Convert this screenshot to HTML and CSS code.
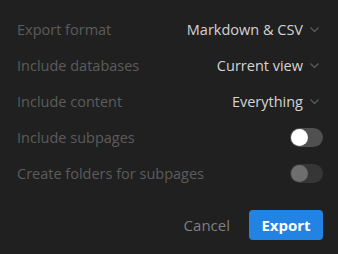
FILE: index.html
```html
<!DOCTYPE html>
<html lang="en">
<head>
    <meta charset="UTF-8">
    <meta name="viewport" content="width=device-width, initial-scale=1.0">
    <title>Export</title>
    <link rel="stylesheet" href="styles.css">
</head>
<body>
    <div class="dialog">
        <div class="row">
            <span class="label">Export format</span>
            <span class="select">Markdown &amp; CSV
                <svg class="chevron" width="9" height="5" viewBox="0 0 9 5"><path d="M0.5 0.5 L4.5 4.5 L8.5 0.5" /></svg>
            </span>
        </div>
        <div class="row">
            <span class="label">Include databases</span>
            <span class="select">Current view
                <svg class="chevron" width="9" height="5" viewBox="0 0 9 5"><path d="M0.5 0.5 L4.5 4.5 L8.5 0.5" /></svg>
            </span>
        </div>
        <div class="row">
            <span class="label">Include content</span>
            <span class="select">Everything
                <svg class="chevron" width="9" height="5" viewBox="0 0 9 5"><path d="M0.5 0.5 L4.5 4.5 L8.5 0.5" /></svg>
            </span>
        </div>
        <div class="row">
            <span class="label">Include subpages</span>
            <span class="toggle"><span class="knob"></span></span>
        </div>
        <div class="row">
            <span class="label">Create folders for subpages</span>
            <span class="toggle disabled"><span class="knob"></span></span>
        </div>
        <div class="actions">
            <button class="cancel">Cancel</button>
            <button class="export">Export</button>
        </div>
    </div>
</body>
</html>
```

FILE: styles.css
```css
body {
    margin: 0;
    padding: 0;
    background-color: #202020;
    font-family: 'Open Sans', 'Noto Sans', Arial, sans-serif;
    font-size: 14.5px;
}
.dialog {
    padding: 11px 15px 0 17px;
    display: flex;
    flex-direction: column;
}
.row {
    height: 36px;
    display: flex;
    align-items: center;
    justify-content: space-between;
}
.label {
    color: #5c5c5c;
}
.select {
    color: #d4d4d4;
    display: flex;
    align-items: center;
    gap: 7px;
    padding-right: 4px;
}
.chevron {
    fill: none;
    stroke: #5c5c5c;
    stroke-width: 1.2;
}
.toggle {
    width: 33px;
    height: 19px;
    border-radius: 10px;
    background-color: #505050;
    display: flex;
    align-items: center;
    padding: 0 1px;
    box-sizing: border-box;
}
.knob {
    width: 17px;
    height: 17px;
    border-radius: 50%;
    background-color: #ffffff;
}
.toggle.disabled {
    background-color: #363636;
}
.toggle.disabled .knob {
    background-color: #6e6e6e;
}
.actions {
    display: flex;
    justify-content: flex-end;
    align-items: center;
    gap: 11px;
    margin-top: 19px;
}
button {
    font-family: inherit;
    font-size: 15px;
    border: none;
    cursor: pointer;
}
.cancel {
    background: none;
    color: #7f7f7f;
    padding: 0 8px;
}
.export {
    background-color: #2383e2;
    color: #ffffff;
    font-weight: bold;
    height: 30px;
    width: 74px;
    border-radius: 4px;
    padding: 0;
}
```
